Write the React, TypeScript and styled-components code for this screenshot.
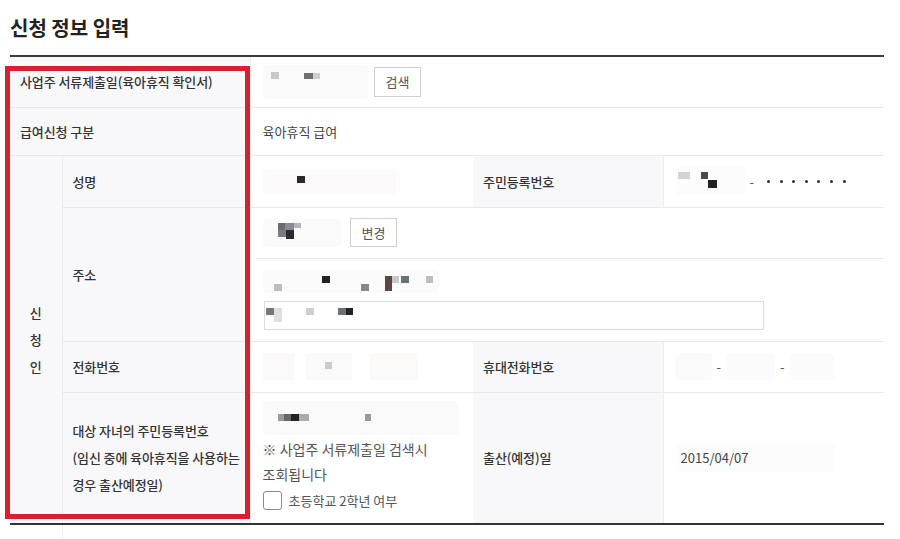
import React from "react";
import styled, { createGlobalStyle } from "styled-components";

type Px = { x: number; y: number; w: number; h: number; c: string };

const GlobalStyle = createGlobalStyle`
  html, body {
    margin: 0;
    padding: 0;
    background: #ffffff;
  }
  body {
    font-family: "Noto Sans CJK KR", "Noto Sans", sans-serif;
    color: #333;
  }
`;

const Page = styled.div`
  width: 900px;
  height: 539px;
  overflow: hidden;
  padding: 16px 0 0 10px;
  box-sizing: border-box;
`;

const Title = styled.h2`
  margin: 0 0 15px;
  font-size: 20px;
  line-height: 24px;
  font-weight: 700;
  color: #222;
`;

const TableWrap = styled.div`
  position: relative;
  width: 874px;
`;

const Table = styled.table`
  width: 874px;
  border-collapse: collapse;
  table-layout: fixed;
  border-top: 2px solid #3c3c3c;
  font-size: 13px;
`;

const Row = styled.tr<{ $h: number; $last?: boolean }>`
  height: ${(p) => p.$h}px;
  border-bottom: ${(p) => (p.$last ? "2px solid #333" : "1px solid #e8e8ea")};
`;

const Th = styled.th<{ $center?: boolean }>`
  background: #f8f8fa;
  font-weight: 500;
  color: #333;
  text-align: ${(p) => (p.$center ? "center" : "left")};
  padding: 0 ${(p) => (p.$center ? "10px" : "0")} 0 10px;
  vertical-align: middle;
  line-height: 27px;
  letter-spacing: -0.1px;
  white-space: nowrap;
  overflow: hidden;
  border-right: 1px solid #ececef;
`;

const Td = styled.td<{ $flush?: boolean; $top?: boolean }>`
  padding: ${(p) => (p.$flush ? "0" : p.$top ? "8px 12px 0" : "0 12px")};
  vertical-align: ${(p) => (p.$top || p.$flush ? "top" : "middle")};
  color: #444;
  font-weight: 400;
`;

const TailCell = styled.td<{ $line?: boolean }>`
  height: 12px;
  border-right: ${(p) => (p.$line ? "1px solid #ececef" : "none")};
`;

const Inline = styled.div<{ $gap?: number }>`
  display: flex;
  align-items: center;
  gap: ${(p) => p.$gap ?? 0}px;
`;

const Button = styled.button<{ $h?: number }>`
  height: ${(p) => p.$h ?? 30}px;
  padding: 0 11px;
  border: 1px solid #cfcfcf;
  background: #fff;
  color: #555;
  font-family: inherit;
  font-size: 13px;
`;

const SubRow = styled.div`
  height: 51px;
  box-sizing: border-box;
  margin-left: 5px;
  padding-left: 7px;
  display: flex;
  align-items: center;
  border-bottom: 1px solid #e8e8ea;
`;

const AddrBlock = styled.div`
  padding: 11px 12px 0 12px;
  display: flex;
  flex-direction: column;
  gap: 8px;
`;

const TextBox = styled.div`
  width: 500px;
  height: 29px;
  box-sizing: border-box;
  border: 1px solid #dcdcdf;
  background: #fff;
  margin-left: 1px;
`;

const Dash = styled.span`
  color: #555;
  font-size: 13px;
  padding: 0 5px;
`;

const Dots = styled.span`
  display: inline-flex;
  gap: 9.6px;
  margin-left: 8px;
`;

const Dot = styled.span`
  width: 3px;
  height: 3px;
  border-radius: 50%;
  background: #333;
`;

const Note = styled.p`
  margin: 2px 0 0;
  font-size: 14px;
  line-height: 25px;
  color: #555;
  font-weight: 400;
  white-space: nowrap;
`;

const Check = styled.label`
  display: flex;
  align-items: center;
  gap: 7px;
  margin-top: 4px;
  font-size: 13px;
  color: #555;
`;

const Box = styled.span`
  width: 19px;
  height: 19px;
  box-sizing: border-box;
  border: 1px solid #8a8a8a;
  border-radius: 3px;
  background: #fff;
`;

const DateBox = styled.div`
  width: 159px;
  height: 29px;
  box-sizing: border-box;
  padding-left: 5px;
  display: flex;
  align-items: center;
  background: #fcfcfd;
  color: #444;
  font-size: 13px;
`;

const Highlight = styled.div`
  position: absolute;
  left: -5px;
  top: 11px;
  width: 245px;
  height: 453px;
  box-sizing: border-box;
  border: 5px solid #d3232d;
  pointer-events: none;
`;

// blurred (mosaic) personal data
const Mosaic = ({
  w,
  h,
  px = [],
  bg = "#fafafb",
}: {
  w: number;
  h: number;
  px?: Px[];
  bg?: string;
}) => (
  <svg width={w} height={h} style={{ display: "block", flex: "none" }}>
    <rect x={0} y={0} width={w} height={h} rx={4} fill={bg} />
    {px.map((p, i) => (
      <rect key={i} x={p.x} y={p.y} width={p.w} height={p.h} fill={p.c} />
    ))}
  </svg>
);

const employerPx: Px[] = [
  { x: 8, y: 7, w: 8, h: 7, c: "#c9c9c9" },
  { x: 41, y: 8, w: 9, h: 6, c: "#6a7074" },
  { x: 50, y: 8, w: 7, h: 6, c: "#cfcfcf" },
];
const namePx: Px[] = [{ x: 34, y: 7, w: 8, h: 7, c: "#2a2a2a" }];
const ssnPx: Px[] = [
  { x: 2, y: 6, w: 12, h: 7, c: "#d3d3d6" },
  { x: 25, y: 6, w: 7, h: 7, c: "#4a4a4e" },
  { x: 32, y: 14, w: 9, h: 8, c: "#222" },
];
const zipPx: Px[] = [
  { x: 15, y: 4, w: 7, h: 7, c: "#6b6b70" },
  { x: 22, y: 4, w: 9, h: 7, c: "#8a8a90" },
  { x: 31, y: 4, w: 7, h: 5, c: "#b4b4bc" },
  { x: 15, y: 11, w: 8, h: 7, c: "#7a7a80" },
  { x: 23, y: 11, w: 8, h: 9, c: "#2a2a30" },
];
const addrPx: Px[] = [
  { x: 59, y: 6, w: 8, h: 7, c: "#222" },
  { x: 11, y: 14, w: 8, h: 7, c: "#bdbdbd" },
  { x: 98, y: 14, w: 8, h: 7, c: "#888" },
  { x: 122, y: 6, w: 7, h: 15, c: "#5a4848" },
  { x: 129, y: 6, w: 7, h: 7, c: "#c8c8cc" },
  { x: 138, y: 6, w: 8, h: 7, c: "#6a7075" },
  { x: 163, y: 6, w: 7, h: 7, c: "#bdbdbd" },
];
const addr2Px: Px[] = [
  { x: 1, y: 6, w: 8, h: 7, c: "#7a7676" },
  { x: 9, y: 6, w: 8, h: 14, c: "#e0e0e0" },
  { x: 41, y: 6, w: 8, h: 7, c: "#cfcfcf" },
  { x: 73, y: 6, w: 8, h: 7, c: "#6a7075" },
  { x: 81, y: 6, w: 7, h: 7, c: "#222" },
];
const phonePx: Px[] = [
  { x: 0, y: 0, w: 32, h: 27, c: "#fcf9fa" },
  { x: 43, y: 0, w: 46, h: 27, c: "#fafafb" },
  { x: 62, y: 9, w: 7, h: 7, c: "#cbcbcb" },
  { x: 107, y: 0, w: 48, h: 27, c: "#fcfaf9" },
];
const childPx: Px[] = [
  { x: 15, y: 13, w: 6, h: 7, c: "#9a9a9a" },
  { x: 21, y: 13, w: 7, h: 7, c: "#666" },
  { x: 28, y: 13, w: 8, h: 7, c: "#222" },
  { x: 36, y: 13, w: 10, h: 7, c: "#ababab" },
  { x: 102, y: 13, w: 6, h: 7, c: "#9a9a9a" },
];

const App = () => {
  return (
    <>
      <GlobalStyle />
      <Page>
        <Title>신청 정보 입력</Title>
        <TableWrap>
          <Table>
            <colgroup>
              <col style={{ width: 52 }} />
              <col style={{ width: 188 }} />
              <col style={{ width: 223 }} />
              <col style={{ width: 190 }} />
              <col style={{ width: 221 }} />
            </colgroup>
            <tbody>
              <Row $h={51}>
                <Th colSpan={2}>사업주 서류제출일(육아휴직 확인서)</Th>
                <Td colSpan={3}>
                  <Inline $gap={6}>
                    <Mosaic w={105} h={34} px={employerPx} />
                    <Button>검색</Button>
                  </Inline>
                </Td>
              </Row>
              <Row $h={48}>
                <Th colSpan={2}>급여신청 구분</Th>
                <Td colSpan={3}>육아휴직 급여</Td>
              </Row>
              <Row $h={52}>
                <Th rowSpan={4} $center>
                  신<br />청<br />인
                </Th>
                <Th>성명</Th>
                <Td>
                  <Mosaic w={133} h={25} px={namePx} bg="#fcfafa" />
                </Td>
                <Th>주민등록번호</Th>
                <Td>
                  <Inline>
                    <Mosaic w={69} h={30} px={ssnPx} bg="#fcfcfd" />
                    <Dash>-</Dash>
                    <Dots>
                      {Array.from({ length: 7 }).map((_, i) => (
                        <Dot key={i} />
                      ))}
                    </Dots>
                  </Inline>
                </Td>
              </Row>
              <Row $h={134}>
                <Th>주소</Th>
                <Td colSpan={3} $flush>
                  <SubRow>
                    <Inline $gap={9}>
                      <Mosaic w={78} h={28} px={zipPx} />
                      <Button $h={29}>변경</Button>
                    </Inline>
                  </SubRow>
                  <AddrBlock>
                    <Mosaic w={176} h={23} px={addrPx} bg="#fbfbfc" />
                    <TextBox>
                      <Mosaic w={176} h={27} px={addr2Px} bg="#ffffff" />
                    </TextBox>
                  </AddrBlock>
                </Td>
              </Row>
              <Row $h={51}>
                <Th>전화번호</Th>
                <Td>
                  <Mosaic w={155} h={27} px={phonePx} bg="#ffffff" />
                </Td>
                <Th>휴대전화번호</Th>
                <Td>
                  <Inline>
                    <Mosaic w={36} h={27} bg="#fbfafb" />
                    <Dash>-</Dash>
                    <Mosaic w={49} h={27} bg="#fbfbfc" />
                    <Dash>-</Dash>
                    <Mosaic w={45} h={27} bg="#fbfbfc" />
                  </Inline>
                </Td>
              </Row>
              <Row $h={132} $last>
                <Th>
                  대상 자녀의 주민등록번호
                  <br />
                  (임신 중에 육아휴직을 사용하는
                  <br />
                  경우 출산예정일)
                </Th>
                <Td $top>
                  <Mosaic w={196} h={34} px={childPx} bg="#fafafb" />
                  <Note>
                    ※ 사업주 서류제출일 검색시
                    <br />
                    조회됩니다
                  </Note>
                  <Check>
                    <Box />
                    초등학교 2학년 여부
                  </Check>
                </Td>
                <Th>출산(예정)일</Th>
                <Td>
                  <DateBox>2015/04/07</DateBox>
                </Td>
              </Row>
              <tr>
                <TailCell $line />
                <TailCell colSpan={4} />
              </tr>
            </tbody>
          </Table>
          <Highlight />
        </TableWrap>
      </Page>
    </>
  );
};

export default App;
